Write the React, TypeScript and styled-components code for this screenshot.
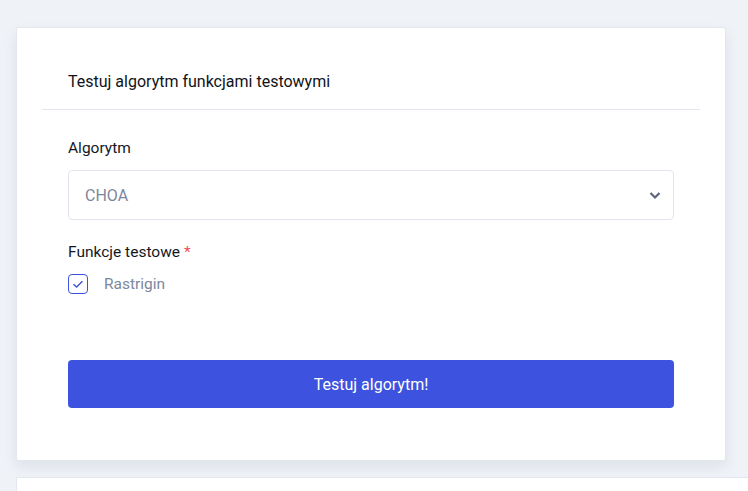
import React from "react";
import styled, { createGlobalStyle } from "styled-components";

const Global = createGlobalStyle`
  html, body { margin: 0; padding: 0; overflow: hidden; background: #eff2f7; }
  body { font-family: Roboto, "Liberation Sans", sans-serif; color: #14171f; }
  * { box-sizing: border-box; }
`;

const Page = styled.div`
  width: 100vw;
  height: 100vh;
  overflow: hidden;
  padding: 27px 0 0 16px;
  display: flex;
  flex-direction: column;
  gap: 16px;
`;

const Card = styled.section`
  flex: none;
  width: 710px;
  background: #fff;
  border: 1px solid #e3e7ef;
  border-radius: 2px;
  box-shadow: 0 6px 14px rgba(30, 45, 80, 0.08);
  padding: 0 25px 52px;
`;

const NextCard = styled.section`
  flex: none;
  width: 760px;
  height: 60px;
  background: #fff;
  border: 1px solid #e3e7ef;
`;

const Header = styled.header`
  padding: 44px 26px 17px;
  border-bottom: 1px solid #e4e7ef;
`;

const Title = styled.h2`
  margin: 0;
  font-size: 16px;
  line-height: 20px;
  font-weight: 400;
  color: #111318;
`;

const Body = styled.div`
  padding: 28px 26px 0;
  display: flex;
  flex-direction: column;
`;

const Label = styled.label`
  font-size: 15.5px;
  line-height: 20px;
  color: #14171f;
  margin-bottom: 12px;
`;

const Req = styled.span`
  color: #ef4b5a;
  margin-left: 4px;
`;

const SelectBox = styled.div`
  height: 50px;
  border: 1px solid #e1e5ee;
  border-radius: 4px;
  display: flex;
  align-items: center;
  justify-content: space-between;
  padding: 0 11px 0 16px;
  margin-bottom: 22px;
  font-size: 16px;
  color: #7d879b;
`;

const CheckRow = styled.div`
  display: flex;
  align-items: center;
  gap: 16px;
  font-size: 15.5px;
  color: #7d879b;
  margin-bottom: 66px;
`;

const Box = styled.span`
  width: 20px;
  height: 20px;
  border: 1.5px solid #3d52de;
  border-radius: 4px;
  display: flex;
  align-items: center;
  justify-content: center;
`;

const Button = styled.button`
  height: 48px;
  border: none;
  border-radius: 4px;
  background: #3d52de;
  color: #fff;
  font-family: inherit;
  font-size: 16px;
`;

export default function App() {
  return (
    <>
      <Global />
      <Page>
        <Card>
          <Header>
            <Title>Testuj algorytm funkcjami testowymi</Title>
          </Header>
          <Body>
            <Label>Algorytm</Label>
            <SelectBox>
              <span>CHOA</span>
              <svg width="14" height="14" viewBox="0 0 14 14">
                <path d="M2.5 5 L7 9.5 L11.5 5" fill="none" stroke="#5d6678" strokeWidth="2.2" />
              </svg>
            </SelectBox>
            <Label>
              Funkcje testowe<Req>*</Req>
            </Label>
            <CheckRow>
              <Box>
                <svg width="14" height="14" viewBox="0 0 14 14">
                  <path d="M2.5 7.2 L5.6 10 L11.4 4.2" fill="none" stroke="#3d52de" strokeWidth="1.4" />
                </svg>
              </Box>
              <span>Rastrigin</span>
            </CheckRow>
            <Button>Testuj algorytm!</Button>
          </Body>
        </Card>
        <NextCard />
      </Page>
    </>
  );
}
